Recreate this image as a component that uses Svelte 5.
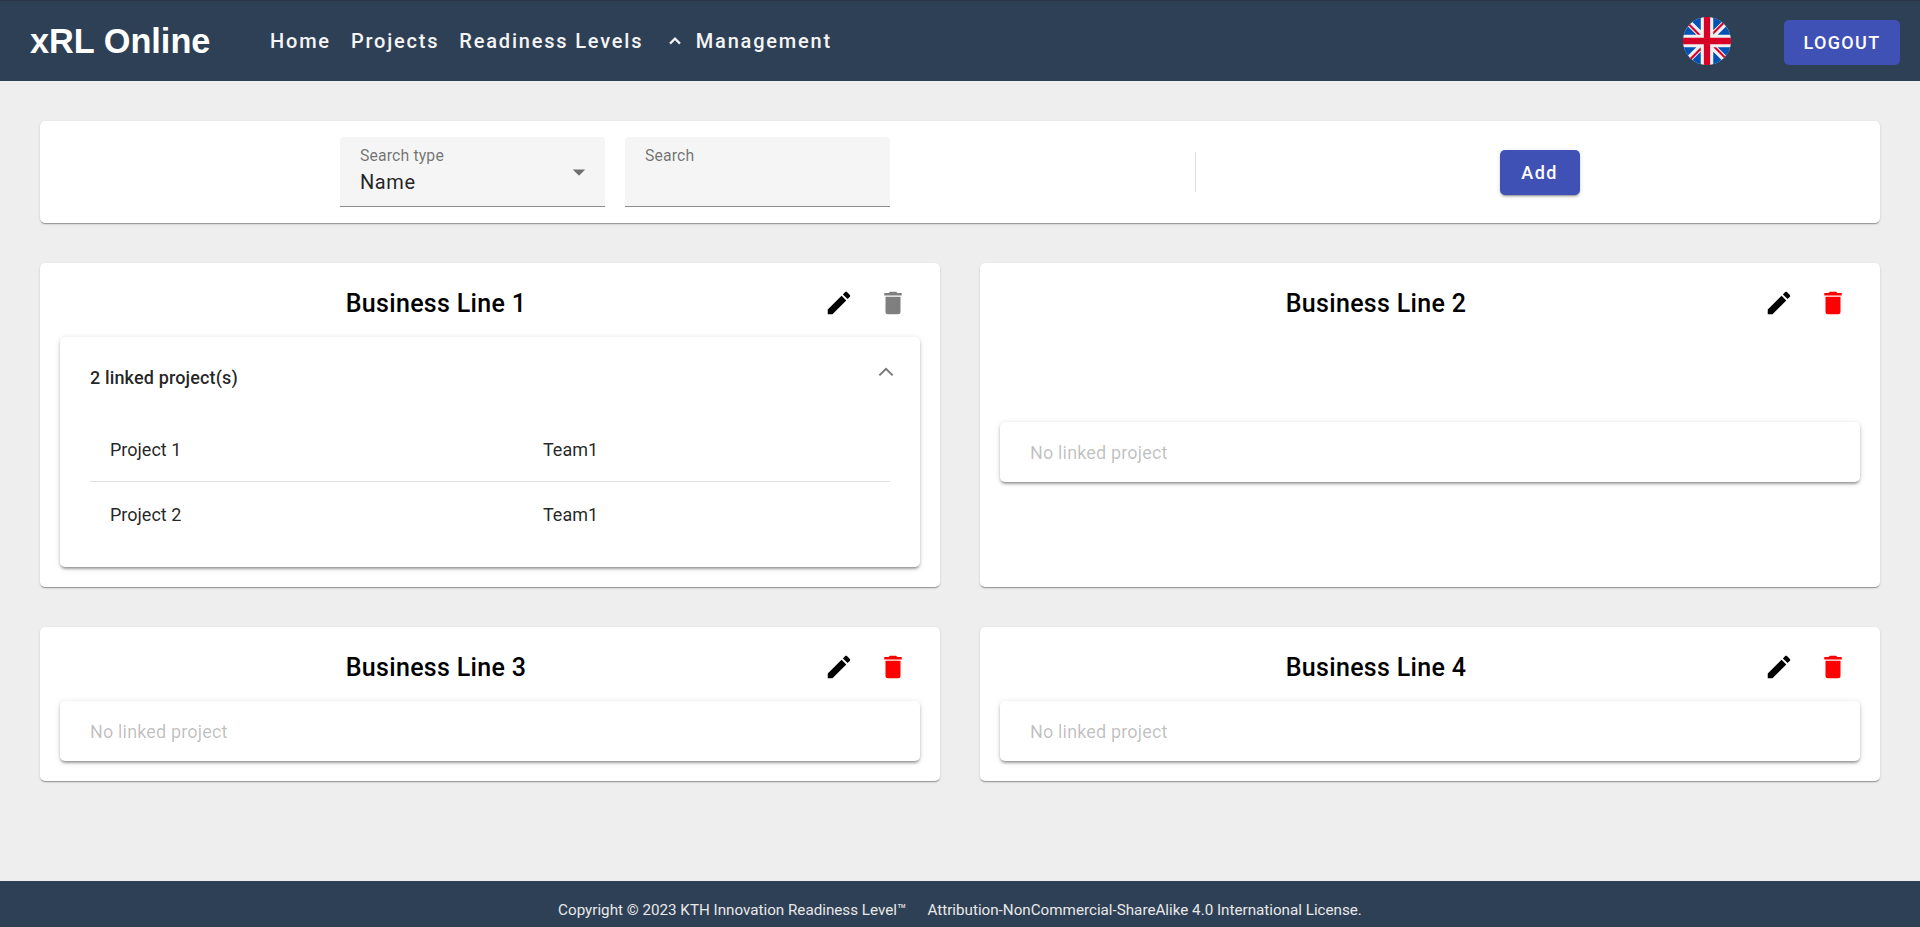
<script>
  const cards = [
    { name: 'Business Line 1', projects: [{ n: 'Project 1', t: 'Team1' }, { n: 'Project 2', t: 'Team1' }], locked: true },
    { name: 'Business Line 2', projects: [], locked: false },
    { name: 'Business Line 3', projects: [], locked: false },
    { name: 'Business Line 4', projects: [], locked: false }
  ];
  const pencil = 'M20.71,7.04C21.1,6.65 21.1,6 20.71,5.63L18.37,3.29C18,2.9 17.35,2.9 16.96,3.29L15.12,5.12L18.87,8.87M3,17.25V21H6.75L17.81,9.93L14.06,6.18L3,17.25Z';
  const trash = 'M19,4H15.5L14.5,3H9.5L8.5,4H5V6H19M6,19A2,2 0 0,0 8,21H16A2,2 0 0,0 18,19V7H6V19Z';
  const chevron = 'M7.41,15.41L12,10.83L16.59,15.41L18,14L12,8L6,14L7.41,15.41Z';
</script>

<div class="page">
  <header class="bar">
    <div class="logo">xRL Online</div>
    <nav class="nav">
      <a class="home">Home</a>
      <a class="projects">Projects</a>
      <a class="levels">Readiness Levels</a>
      <svg class="navchev" viewBox="0 0 24 24"><path d={chevron} /></svg>
      <a>Management</a>
    </nav>
    <svg class="flag" viewBox="0 0 512 512">
      <circle cx="256" cy="256" r="256" fill="#f0f0f0" />
      <g fill="#0052b4">
        <path d="M52.92,100.142c-20.109,26.163-35.272,56.318-44.101,89.077h133.178L52.92,100.142z" />
        <path d="M503.181,189.219c-8.829-32.758-23.993-62.913-44.101-89.076l-89.075,89.076H503.181z" />
        <path d="M8.819,322.784c8.83,32.758,23.993,62.913,44.101,89.075l89.074-89.075L8.819,322.784z" />
        <path d="M411.858,52.921c-26.163-20.109-56.317-35.272-89.076-44.102v133.177L411.858,52.921z" />
        <path d="M100.142,459.079c26.163,20.109,56.318,35.272,89.076,44.102V370.005L100.142,459.079z" />
        <path d="M189.217,8.819c-32.758,8.83-62.913,23.993-89.075,44.101l89.075,89.075V8.819z" />
        <path d="M322.783,503.181c32.758-8.83,62.913-23.993,89.075-44.101l-89.075-89.075V503.181z" />
        <path d="M370.005,322.784l89.075,89.076c20.108-26.162,35.272-56.318,44.101-89.076H370.005z" />
      </g>
      <g fill="#d80027">
        <path d="M509.833,222.609H289.392V2.167C278.461,0.744,267.317,0,256,0s-22.461,0.744-33.391,2.167v220.441H2.167C0.744,233.539,0,244.683,0,256s0.744,22.461,2.167,33.391h220.441v220.442C233.539,511.256,244.683,512,256,512s22.461-0.744,33.391-2.167V289.392h220.442C511.256,278.461,512,267.317,512,256S511.256,233.539,509.833,222.609z" />
        <path d="M322.783,322.784L437.019,437.02c5.254-5.252,10.266-10.743,15.048-16.435l-97.802-97.802H322.783z" />
        <path d="M189.217,322.784L74.98,437.019c5.252,5.254,10.743,10.266,16.435,15.048l97.802-97.804V322.784z" />
        <path d="M189.217,189.219L74.981,74.98c-5.254,5.252-10.266,10.743-15.048,16.435l97.803,97.803H189.217z" />
        <path d="M322.783,189.219L437.02,74.981c-5.252-5.254-10.743-10.266-16.435-15.047l-97.802,97.803V189.219z" />
      </g>
    </svg>
    <button class="btn logout">LOGOUT</button>
  </header>

  <main class="main">
    <section class="card toolbar">
      <div class="fields">
        <div class="field">
          <span class="flabel">Search type</span>
          <span class="fvalue">Name</span>
          <svg class="arrow" viewBox="0 0 24 24"><path d="M7,10L12,15L17,10H7Z" /></svg>
        </div>
        <div class="field">
          <span class="flabel">Search</span>
        </div>
      </div>
      <div class="divider"></div>
      <div class="addwrap"><button class="btn add">Add</button></div>
    </section>

    <section class="grid">
      {#each cards as c}
        <article class="card line">
          <div class="head">
            <h2>{c.name}</h2>
            <div class="icon-cell"><svg class="ic" viewBox="0 0 24 24"><path d={pencil} /></svg></div>
            <div class="icon-cell"><svg class="ic" class:muted={c.locked} class:red={!c.locked} viewBox="0 0 24 24"><path d={trash} /></svg></div>
          </div>
          <div class="body">
            {#if c.projects.length}
              <div class="panel open">
                <div class="phead">
                  <span>{c.projects.length} linked project(s)</span>
                  <svg class="pchev" viewBox="0 0 24 24"><path d="M6.7 14.7L12 9.4L17.3 14.7" /></svg>
                </div>
                <div class="rows">
                  {#each c.projects as p}
                    <div class="row"><span>{p.n}</span><span>{p.t}</span></div>
                  {/each}
                </div>
              </div>
            {:else}
              <div class="panel empty">No linked project</div>
            {/if}
          </div>
        </article>
      {/each}
    </section>
  </main>

  <footer class="foot">
    <span>Copyright © 2023 KTH Innovation Readiness Level™</span>
    <span>Attribution-NonCommercial-ShareAlike 4.0 International License.</span>
  </footer>
</div>

<style>
  :global(body) {
    margin: 0;
    font-family: Roboto, "Liberation Sans", sans-serif;
    background: #eeeeee;
  }
  .page {
    height: 927px;
    display: flex;
    flex-direction: column;
    overflow: hidden;
  }
  .bar {
    height: 81px;
    box-sizing: border-box;
    background: #2e4055;
    border-top: 1px solid #2b3648;
    color: #f5f5f5;
    display: flex;
    align-items: center;
    padding: 0 20px 0 30px;
    flex: none;
  }
  .logo {
    font-family: "Liberation Sans", Arial, sans-serif;
    font-weight: 700;
    font-size: 34.3px;
    color: #fff;
    width: 240px;
    padding-top: 1px;
  }
  .nav {
    display: flex;
    align-items: center;
    font-size: 20px;
    font-weight: 500;
    letter-spacing: 0.09em;
    flex: 1;
  }
  .home { margin-right: 20px; }
  .projects { margin-right: 20px; }
  .levels { margin-right: 20.5px; }
  .navchev {
    width: 22px;
    height: 22px;
    fill: #f5f5f5;
    stroke: #f5f5f5;
    stroke-width: 0.5;
    margin-right: 10px;
  }
  .flag {
    width: 48px;
    height: 48px;
    margin: 0 53px 0 0;
  }
  .btn {
    border: 0;
    background: #3f51b5;
    color: #fff;
    font-family: inherit;
    font-weight: 500;
    font-size: 18px;
    letter-spacing: 0.075em;
    border-radius: 5px;
    height: 45px;
    padding: 0;
  }
  .logout { width: 116px; margin-top: 3px; }
  .add {
    width: 80px;
    box-shadow: 0 3px 1px -2px rgba(0,0,0,.2), 0 2px 2px 0 rgba(0,0,0,.14), 0 1px 5px 0 rgba(0,0,0,.12);
  }
  .main {
    flex: 1;
    padding: 40px 40px 0;
  }
  .card {
    background: #fff;
    border-radius: 5px;
    box-shadow: 0 2px 1px -1px rgba(0,0,0,.2), 0 1px 1px 0 rgba(0,0,0,.14), 0 1px 3px 0 rgba(0,0,0,.12);
  }
  .toolbar {
    height: 102px;
    display: flex;
    align-items: center;
  }
  .fields {
    width: 1155px;
    box-sizing: border-box;
    padding-left: 300px;
    display: flex;
    gap: 20px;
    align-self: flex-start;
    padding-top: 16px;
  }
  .field {
    width: 265px;
    height: 70px;
    box-sizing: border-box;
    background: #f5f5f5;
    border-radius: 4px 4px 0 0;
    border-bottom: 1px solid #8c8c8c;
    padding: 10px 20px 0;
    position: relative;
    display: flex;
    flex-direction: column;
  }
  .flabel {
    font-size: 15.8px;
    line-height: 18px;
    color: rgba(0,0,0,.55);
    letter-spacing: 0.009em;
  }
  .fvalue {
    margin-top: 5px;
    font-size: 20px;
    line-height: 24px;
    color: rgba(0,0,0,.87);
    letter-spacing: 0.03em;
  }
  .arrow {
    position: absolute;
    right: 11px;
    top: 20px;
    width: 30px;
    height: 30px;
    fill: rgba(0,0,0,.54);
  }
  .divider {
    width: 1px;
    height: 40px;
    background: #dcdcdc;
  }
  .addwrap {
    flex: 1;
    display: flex;
    justify-content: center;
    padding-left: 3px;
  }
  .grid {
    margin-top: 40px;
    display: grid;
    grid-template-columns: 900px 900px;
    column-gap: 40px;
    grid-template-rows: 324px 154px;
    row-gap: 40px;
  }
  .line {
    display: flex;
    flex-direction: column;
    padding: 20px;
    box-sizing: border-box;
  }
  .head {
    display: flex;
    align-items: center;
    height: 40px;
    margin-bottom: 14px;
    flex: none;
  }
  h2 {
    margin: 0;
    flex: 1;
    text-align: center;
    font-size: 25px;
    line-height: 42px;
    padding-top: 2px;
    font-weight: 500;
    letter-spacing: 0.0125em;
    color: #000;
  }
  .icon-cell {
    width: 54px;
    display: flex;
    justify-content: center;
  }
  .ic { width: 30px; height: 30px; fill: #000; }
  .ic.muted { fill: rgba(0,0,0,.5); }
  .ic.red { fill: #ff0000; }
  .body {
    flex: 1;
    display: flex;
    flex-direction: column;
    justify-content: center;
  }
  .panel {
    background: #fff;
    border-radius: 5px;
    box-shadow: 0 3px 3px -2px rgba(0,0,0,.3), 0 2px 3px 0 rgba(0,0,0,.18), 0 1px 6px 0 rgba(0,0,0,.12);
  }
  .panel.empty {
    height: 60px;
    box-sizing: border-box;
    padding: 0 30px;
    display: flex;
    align-items: center;
    font-size: 18px;
    color: rgba(0,0,0,.26);
    letter-spacing: 0.009em;
  }
  .panel.open { height: 230px; box-sizing: border-box; padding: 0 30px; }
  .phead {
    height: 80px;
    display: flex;
    align-items: center;
    justify-content: space-between;
    font-size: 18px;
    font-weight: 500;
    letter-spacing: 0.008em;
    color: rgba(0,0,0,.87);
    position: relative;
  }
  .pchev {
    width: 30px;
    height: 30px;
    fill: none;
    stroke: rgba(0,0,0,.54);
    stroke-width: 1.5;
    position: absolute;
    right: -11px;
    top: 20px;
  }
  .row {
    display: grid;
    grid-template-columns: 433px 1fr;
    height: 64px;
    align-items: center;
    padding-left: 20px;
    font-size: 18px;
    color: rgba(0,0,0,.87);
  }
  .row + .row { border-top: 1px solid #e0e0e0; }
  .foot {
    height: 46px;
    flex: none;
    box-sizing: border-box;
    padding-top: 11px;
    background: #2e4055;
    color: #e8e8e8;
    font-size: 15.2px;
    display: flex;
    align-items: center;
    justify-content: center;
    gap: 21px;
  }
</style>
